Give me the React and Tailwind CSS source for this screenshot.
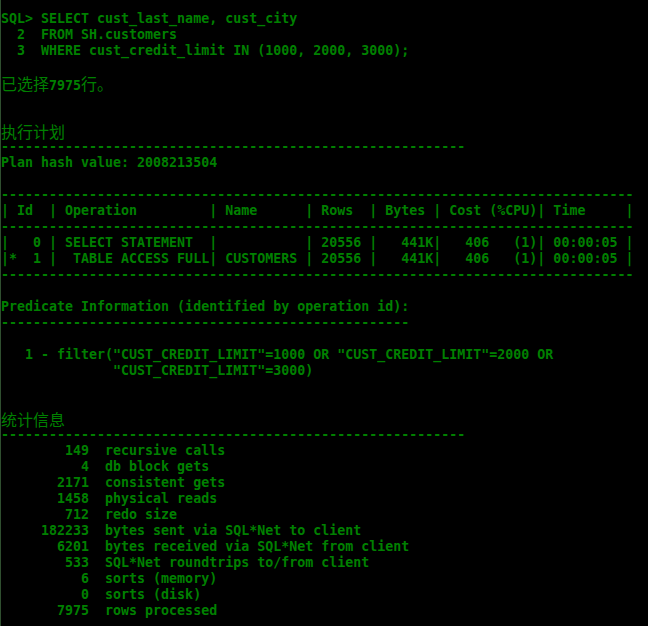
const dash58 = "-".repeat(58)
const dash79 = "-".repeat(79)
const dash51 = "-".repeat(51)

const lines = [
  "SQL> SELECT cust_last_name, cust_city",
  "  2  FROM SH.customers",
  "  3  WHERE cust_credit_limit IN (1000, 2000, 3000);",
  "",
  "已选择7975行。",
  "",
  "",
  "执行计划",
  dash58,
  "Plan hash value: 2008213504",
  "",
  dash79,
  "| Id  | Operation         | Name      | Rows  | Bytes | Cost (%CPU)| Time     |",
  dash79,
  "|   0 | SELECT STATEMENT  |           | 20556 |   441K|   406   (1)| 00:00:05 |",
  "|*  1 |  TABLE ACCESS FULL| CUSTOMERS | 20556 |   441K|   406   (1)| 00:00:05 |",
  dash79,
  "",
  "Predicate Information (identified by operation id):",
  dash51,
  "",
  "   1 - filter(\"CUST_CREDIT_LIMIT\"=1000 OR \"CUST_CREDIT_LIMIT\"=2000 OR",
  "              \"CUST_CREDIT_LIMIT\"=3000)",
  "",
  "",
  "统计信息",
  dash58,
  "        149  recursive calls",
  "          4  db block gets",
  "       2171  consistent gets",
  "       1458  physical reads",
  "        712  redo size",
  "     182233  bytes sent via SQL*Net to client",
  "       6201  bytes received via SQL*Net from client",
  "        533  SQL*Net roundtrips to/from client",
  "          6  sorts (memory)",
  "          0  sorts (disk)",
  "       7975  rows processed",
]

// CJK runs take two cells per char, like the console
function Line({ text }) {
  const parts = text.split(/([\u3000-\u303f\u4e00-\u9fff]+)/)
  return (
    <div className="h-4 leading-4 whitespace-pre">
      {parts.map((p, i) =>
        /[\u3000-\u303f\u4e00-\u9fff]/.test(p) ? (
          <span key={i} className="inline-block h-4 leading-4 font-['Noto_Sans_CJK_SC',sans-serif] text-[16px] font-normal">
            {p}
          </span>
        ) : (
          <span key={i}>{p}</span>
        )
      )}
    </div>
  )
}

export default function App() {
  return (
    <div className="w-[648px] h-[626px] overflow-hidden bg-black border-l border-[#2f4f2f] pt-[11px] text-[#008000] font-['DejaVu_Sans_Mono',monospace] text-[13.3px] font-bold">
      {lines.map((t, i) => (
        <Line key={i} text={t} />
      ))}
    </div>
  )
}
